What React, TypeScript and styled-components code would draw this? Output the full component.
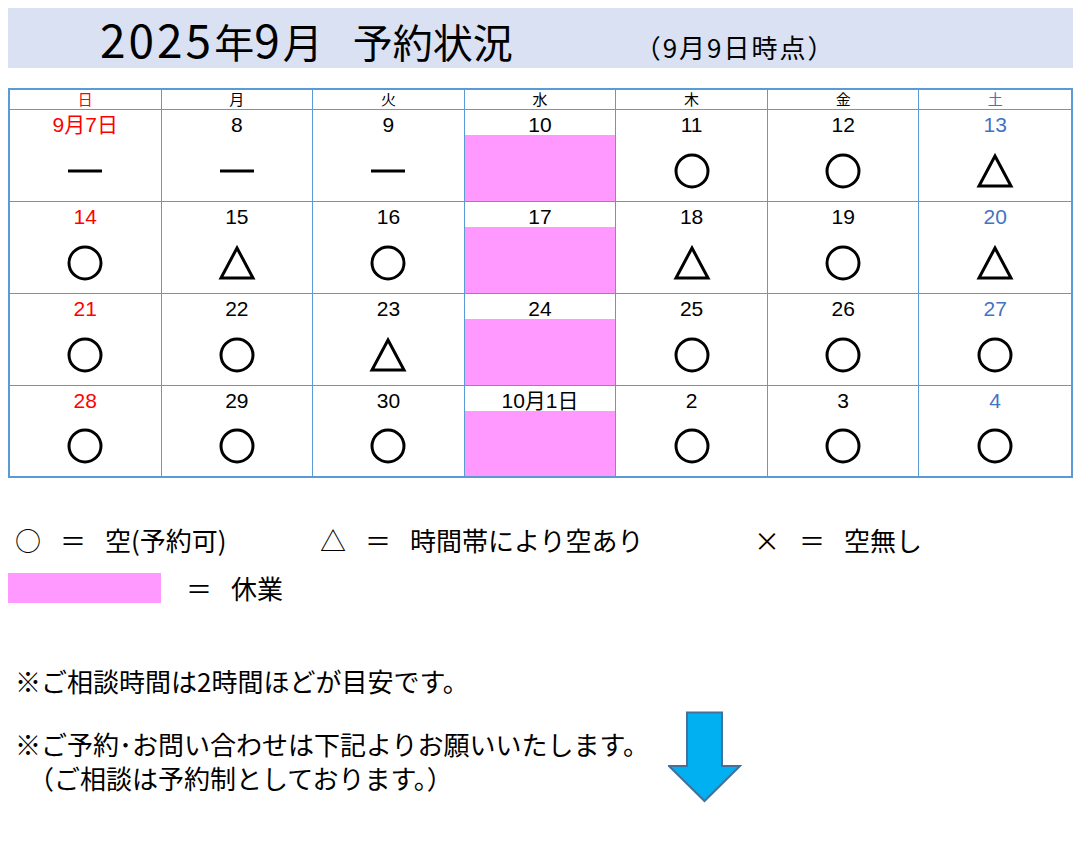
import React from 'react';
import styled, { createGlobalStyle } from 'styled-components';

const GlobalStyle = createGlobalStyle`
  body {
    margin: 0;
    background: #ffffff;
    font-family: 'Noto Sans CJK JP', 'Noto Sans', sans-serif;
    color: #000000;
  }
`;

type Mark = 'open' | 'some' | 'dash' | 'closed';
type Day = { label: string; mark: Mark };

const weekdays = ['日', '月', '火', '水', '木', '金', '土'];

const weeks: Day[][] = [
  [
    { label: '9月7日', mark: 'dash' },
    { label: '8', mark: 'dash' },
    { label: '9', mark: 'dash' },
    { label: '10', mark: 'closed' },
    { label: '11', mark: 'open' },
    { label: '12', mark: 'open' },
    { label: '13', mark: 'some' },
  ],
  [
    { label: '14', mark: 'open' },
    { label: '15', mark: 'some' },
    { label: '16', mark: 'open' },
    { label: '17', mark: 'closed' },
    { label: '18', mark: 'some' },
    { label: '19', mark: 'open' },
    { label: '20', mark: 'some' },
  ],
  [
    { label: '21', mark: 'open' },
    { label: '22', mark: 'open' },
    { label: '23', mark: 'some' },
    { label: '24', mark: 'closed' },
    { label: '25', mark: 'open' },
    { label: '26', mark: 'open' },
    { label: '27', mark: 'open' },
  ],
  [
    { label: '28', mark: 'open' },
    { label: '29', mark: 'open' },
    { label: '30', mark: 'open' },
    { label: '10月1日', mark: 'closed' },
    { label: '2', mark: 'open' },
    { label: '3', mark: 'open' },
    { label: '4', mark: 'open' },
  ],
];

const dayColor = (col: number) => (col === 0 ? '#ff0000' : col === 6 ? '#4472c4' : '#000000');

const Page = styled.div`
  padding: 8px 9px 8px 8px;
  width: 1082px;
  box-sizing: border-box;
`;

const Banner = styled.div`
  height: 60px;
  background: #d9e1f2;
  display: flex;
  align-items: center;
  padding-left: 92px;
`;

const Title = styled.h1`
  margin: 0;
  font-size: 40px;
  font-weight: 400;
  line-height: 1;
  display: flex;
  align-items: baseline;
`;

const Num = styled.span`
  font-size: 46px;
  letter-spacing: 3px;
`;

const TitleGap = styled.span`
  width: 30px;
`;

const AsOf = styled.span`
  font-size: 26px;
  letter-spacing: 2px;
  margin-left: 122px;
`;

const Calendar = styled.div`
  margin-top: 20px;
  border: 2px solid #5b9bd5;
  display: grid;
  grid-template-columns: repeat(7, 1fr);
  font-family: 'Liberation Sans', 'Noto Sans CJK JP', sans-serif;
`;

const HeadCell = styled.div<{ $color: string; $last: boolean }>`
  height: 19px;
  border-bottom: 1px solid #5b9bd5;
  border-right: ${(p) => (p.$last ? 'none' : '1px solid #5b9bd5')};
  color: ${(p) => p.$color};
  font-size: 15px;
  line-height: 19px;
  text-align: center;
`;

const Cell = styled.div<{ $lastCol: boolean; $lastRow: boolean }>`
  height: ${(p) => (p.$lastRow ? '90px' : '91px')};
  border-bottom: ${(p) => (p.$lastRow ? 'none' : '1px solid #5b9bd5')};
  border-right: ${(p) => (p.$lastCol ? 'none' : '1px solid #5b9bd5')};
  display: flex;
  flex-direction: column;
`;

const DateLabel = styled.div<{ $color: string }>`
  height: 25px;
  line-height: 29px;
  font-size: 21px;
  text-align: center;
  color: ${(p) => p.$color};
`;

const MarkArea = styled.div<{ $closed: boolean }>`
  flex: 1;
  background: ${(p) => (p.$closed ? '#ff99ff' : 'transparent')};
  display: flex;
  align-items: center;
  justify-content: center;
  padding-top: 5px;
`;

const Legend = styled.div`
  margin-top: 46px;
  padding-left: 7px;
  display: grid;
  grid-template-columns: 305px 434px 1fr;
  font-size: 26px;
  line-height: 32px;
`;

const LegendItem = styled.div`
  display: flex;
  align-items: center;
`;

const Sym = styled.span`
  width: 25px;
  text-align: center;
`;

const Eq = styled.span`
  margin: 0 19px 0 20px;
`;

const ClosedRow = styled.div`
  margin-top: 16px;
  display: flex;
  align-items: center;
  font-size: 26px;
  line-height: 32px;
`;

const PinkSwatch = styled.div`
  width: 153px;
  height: 30px;
  background: #ff99ff;
  margin-right: 5px;
`;

const Notes = styled.div`
  margin-top: 60px;
  padding-left: 7px;
  font-size: 26px;
`;

const NoteLine = styled.div`
  line-height: 34px;
  white-space: pre;
`;

const ContactRow = styled.div`
  margin-top: 13px;
  display: flex;
  align-items: flex-start;
`;

const ContactText = styled.div`
  margin-top: 16px;
  width: 653px;
`;

function Circle() {
  return (
    <svg width="38" height="38" viewBox="0 0 38 38">
      <circle cx="19" cy="19" r="16" fill="none" stroke="#000" strokeWidth="3" />
    </svg>
  );
}

function Triangle() {
  return (
    <svg width="38" height="36" viewBox="0 0 38 36">
      <path d="M19 3 L35 33 L3 33 Z" fill="none" stroke="#000" strokeWidth="3" strokeLinejoin="miter" />
    </svg>
  );
}

function Dash() {
  return (
    <svg width="36" height="6" viewBox="0 0 36 6">
      <rect x="1" y="1.5" width="34" height="3" fill="#000" />
    </svg>
  );
}

function DownArrow() {
  return (
    <svg width="76" height="92" viewBox="0 0 76 92">
      <path
        d="M19 1.5 H54 V55 H72 L36.5 90 L1 55 H19 Z"
        fill="#00b0f0"
        stroke="#41719c"
        strokeWidth="2"
        strokeLinejoin="miter"
      />
    </svg>
  );
}

export default function App() {
  return (
    <>
      <GlobalStyle />
      <Page>
        <Banner>
          <Title>
            <Num>2025</Num>年<Num>9</Num>月<TitleGap />予約状況
            <AsOf>（9月9日時点）</AsOf>
          </Title>
        </Banner>

        <Calendar>
          {weekdays.map((w, i) => (
            <HeadCell key={w} $color={dayColor(i)} $last={i === 6}>
              {w}
            </HeadCell>
          ))}
          {weeks.map((week, r) =>
            week.map((d, c) => (
              <Cell key={`${r}-${c}`} $lastCol={c === 6} $lastRow={r === weeks.length - 1}>
                <DateLabel $color={d.label === '10月1日' ? '#000000' : dayColor(c)}>{d.label}</DateLabel>
                <MarkArea $closed={d.mark === 'closed'}>
                  {d.mark === 'open' && <Circle />}
                  {d.mark === 'some' && <Triangle />}
                  {d.mark === 'dash' && <Dash />}
                </MarkArea>
              </Cell>
            ))
          )}
        </Calendar>

        <Legend>
          <LegendItem>
            <Sym>○</Sym>
            <Eq>＝</Eq>
            <span>空(予約可)</span>
          </LegendItem>
          <LegendItem>
            <Sym>△</Sym>
            <Eq>＝</Eq>
            <span>時間帯により空あり</span>
          </LegendItem>
          <LegendItem>
            <Sym>×</Sym>
            <Eq>＝</Eq>
            <span>空無し</span>
          </LegendItem>
        </Legend>

        <ClosedRow>
          <PinkSwatch />
          <Eq>＝</Eq>
          <span>休業</span>
        </ClosedRow>

        <Notes>
          <NoteLine>※ご相談時間は2時間ほどが目安です。</NoteLine>
          <ContactRow>
            <ContactText>
              <NoteLine>※ご予約･お問い合わせは下記よりお願いいたします。</NoteLine>
              <NoteLine>　（ご相談は予約制としております。）</NoteLine>
            </ContactText>
            <DownArrow />
          </ContactRow>
        </Notes>
      </Page>
    </>
  );
}
